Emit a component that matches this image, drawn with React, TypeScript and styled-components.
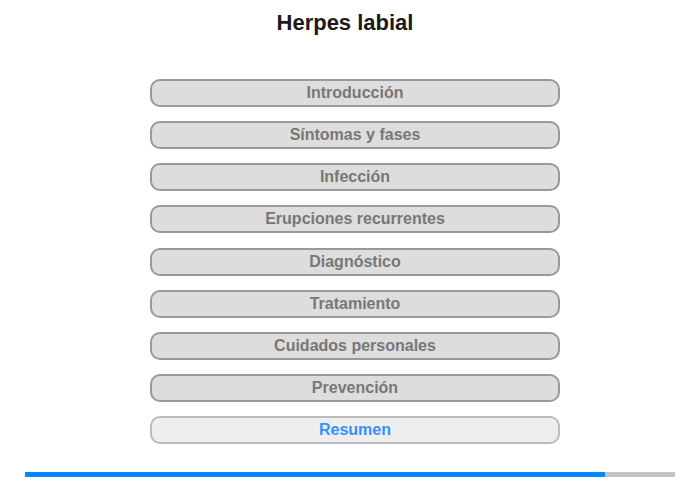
import { createGlobalStyle, styled } from "styled-components";

const GlobalStyle = createGlobalStyle`
  body {
    margin: 0;
    background: #fff;
    font-family: "Liberation Sans", Arial, sans-serif;
  }
`;

const Page = styled.div`
  width: 700px;
  height: 480px;
  display: flex;
  flex-direction: column;
  box-sizing: border-box;
`;

const Title = styled.h1`
  margin: 10px 10px 0 0;
  font-size: 22px;
  line-height: 26px;
  font-weight: bold;
  color: #1a1a1a;
  text-align: center;
`;

const Menu = styled.nav`
  display: flex;
  flex-direction: column;
  gap: 14.15px;
  margin: 43px 0 0 150px;
  width: 410px;
`;

const MenuButton = styled.button<{ $active?: boolean }>`
  height: 28px;
  box-sizing: border-box;
  border: 2px solid ${(p) => (p.$active ? "#bbb" : "#999")};
  border-radius: 10px;
  background: ${(p) => (p.$active ? "#eee" : "#ddd")};
  color: ${(p) => (p.$active ? "#3391ff" : "#777")};
  font-family: "Liberation Sans", Arial, sans-serif;
  font-size: 16px;
  font-weight: bold;
  padding: 0;
  cursor: pointer;
`;

const Progress = styled.div`
  margin: 28px 0 0 25px;
  width: 650px;
  height: 5px;
  background: #c4c4c4;
  display: flex;
`;

const ProgressFill = styled.div`
  height: 100%;
  background: #0088ff;
`;

const sections = [
  "Introducción",
  "Síntomas y fases",
  "Infección",
  "Erupciones recurrentes",
  "Diagnóstico",
  "Tratamiento",
  "Cuidados personales",
  "Prevención",
  "Resumen",
];

export default function App() {
  const current = sections.length - 1;
  return (
    <Page>
      <GlobalStyle />
      <Title>Herpes labial</Title>
      <Menu>
        {sections.map((s, i) => (
          <MenuButton key={s} $active={i === current}>
            {s}
          </MenuButton>
        ))}
      </Menu>
      <Progress>
        <ProgressFill style={{ width: "580px" }} />
      </Progress>
    </Page>
  );
}
